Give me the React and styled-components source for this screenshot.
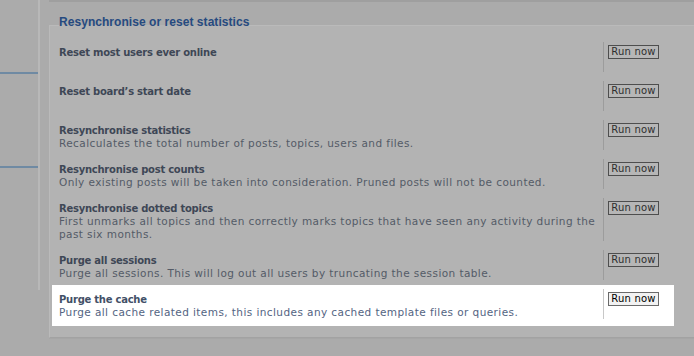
import React from 'react'
import styled, { createGlobalStyle } from 'styled-components'

const GlobalStyle = createGlobalStyle`
    html, body {
        margin: 0;
        padding: 0;
        background-color: #ababab;
        overflow: hidden;
    }
`
const Page = styled.div`
    display: flex;
    width: 694px;
    height: 356px;
    overflow: hidden;
    font-family: "DejaVu Sans", Verdana, sans-serif;
`
const Sidebar = styled.div`
    flex: 0 0 38px;
    height: 290px;
    border-right: 2px solid #b8b8b8;
    display: flex;
    flex-direction: column;
`
const MenuBlock = styled.div`
    height: ${props => props.$h}px;
    border-bottom: ${props => props.$line ? '2px solid #6f8aa3' : 'none'};
    box-sizing: border-box;
`
const Main = styled.div`
    flex: 1;
    padding-left: 9px;
    overflow: hidden;
`
const PrevPanel = styled.div`
    height: 0;
    border-bottom: 2px solid #9f9f9f;
    margin-right: -20px;
`
const Fieldset = styled.fieldset`
    margin: 14px -30px 0 0;
    padding: 8px 0 9px 9px;
    border: 1px solid #bababa;
    border-bottom-color: #a2a2a2;
    background-color: #b3b3b3;
    box-shadow: 0 1px 0 #a6a6a6;
`
const Legend = styled.legend`
    padding: 0 0 6px 0;
    font-family: "Liberation Sans", Arial, sans-serif;
    font-size: 12px;
    line-height: 12px;
    font-weight: bold;
    color: #264a80;
    letter-spacing: 0.05px;
`
const Row = styled.dl`
    display: flex;
    margin: 0 0 9px 0;
    width: 609px;
    ${props => props.$highlight && `
        background-color: #ffffff;
        margin: -4px 0 2px -7px;
        padding: 4px 6px 7px 7px;
        position: relative;
    `}
`
const Term = styled.dt`
    width: 544px;
    padding-top: 4px;
    line-height: 13px;
    font-size: 10px;
`
const Title = styled.div`
    font-weight: bold;
    font-size: 10px;
    letter-spacing: -0.25px;
    color: ${props => props.$lit ? '#425067' : '#3e4756'};
`
const Desc = styled.div`
    color: ${props => props.$lit ? '#536482' : '#545b67'};
    min-height: 13px;
    font-size: 10.5px;
    letter-spacing: 0.42px;
`
const Action = styled.dd`
    margin: 0;
    flex: 1;
    border-left: 1px solid ${props => props.$lit ? '#c8c8c8' : '#9c9c9c'};
    padding: 3px 0 0 4px;
`
const RunButton = styled.button`
    display: block;
    width: 51px;
    height: 14px;
    padding: 0;
    font-family: "DejaVu Sans", Verdana, sans-serif;
    font-size: 10px;
    line-height: 12px;
    letter-spacing: 0.2px;
    border: 1px solid ${props => props.$lit ? '#6a6a6a' : '#4e4e4e'};
    background-color: ${props => props.$lit ? '#f2f2f2' : '#b6b6b6'};
    color: ${props => props.$lit ? '#000000' : '#2e2e2e'};
    border-radius: 0;
`

const actions = [
    { title: 'Reset most users ever online', desc: '' },
    { title: 'Reset board’s start date', desc: '' },
    { title: 'Resynchronise statistics', desc: 'Recalculates the total number of posts, topics, users and files.' },
    { title: 'Resynchronise post counts', desc: 'Only existing posts will be taken into consideration. Pruned posts will not be counted.' },
    { title: 'Resynchronise dotted topics', desc: 'First unmarks all topics and then correctly marks topics that have seen any activity during the past six months.' },
    { title: 'Purge all sessions', desc: 'Purge all sessions. This will log out all users by truncating the session table.' },
    { title: 'Purge the cache', desc: 'Purge all cache related items, this includes any cached template files or queries.', lit: true },
]

function App() {
    return (
        <>
            <GlobalStyle />
            <Page>
                <Sidebar>
                    <MenuBlock $h={74} $line />
                    <MenuBlock $h={94} $line />
                </Sidebar>
                <Main>
                    <PrevPanel />
                    <Fieldset>
                        <Legend>Resynchronise or reset statistics</Legend>
                        {actions.map(item => (
                            <Row key={item.title} $highlight={item.lit}>
                                <Term>
                                    <Title $lit={item.lit}>{item.title}</Title>
                                    <Desc $lit={item.lit}>{item.desc}</Desc>
                                </Term>
                                <Action $lit={item.lit}>
                                    <RunButton $lit={item.lit}>Run now</RunButton>
                                </Action>
                            </Row>
                        ))}
                    </Fieldset>
                </Main>
            </Page>
        </>
    )
}

export default App
